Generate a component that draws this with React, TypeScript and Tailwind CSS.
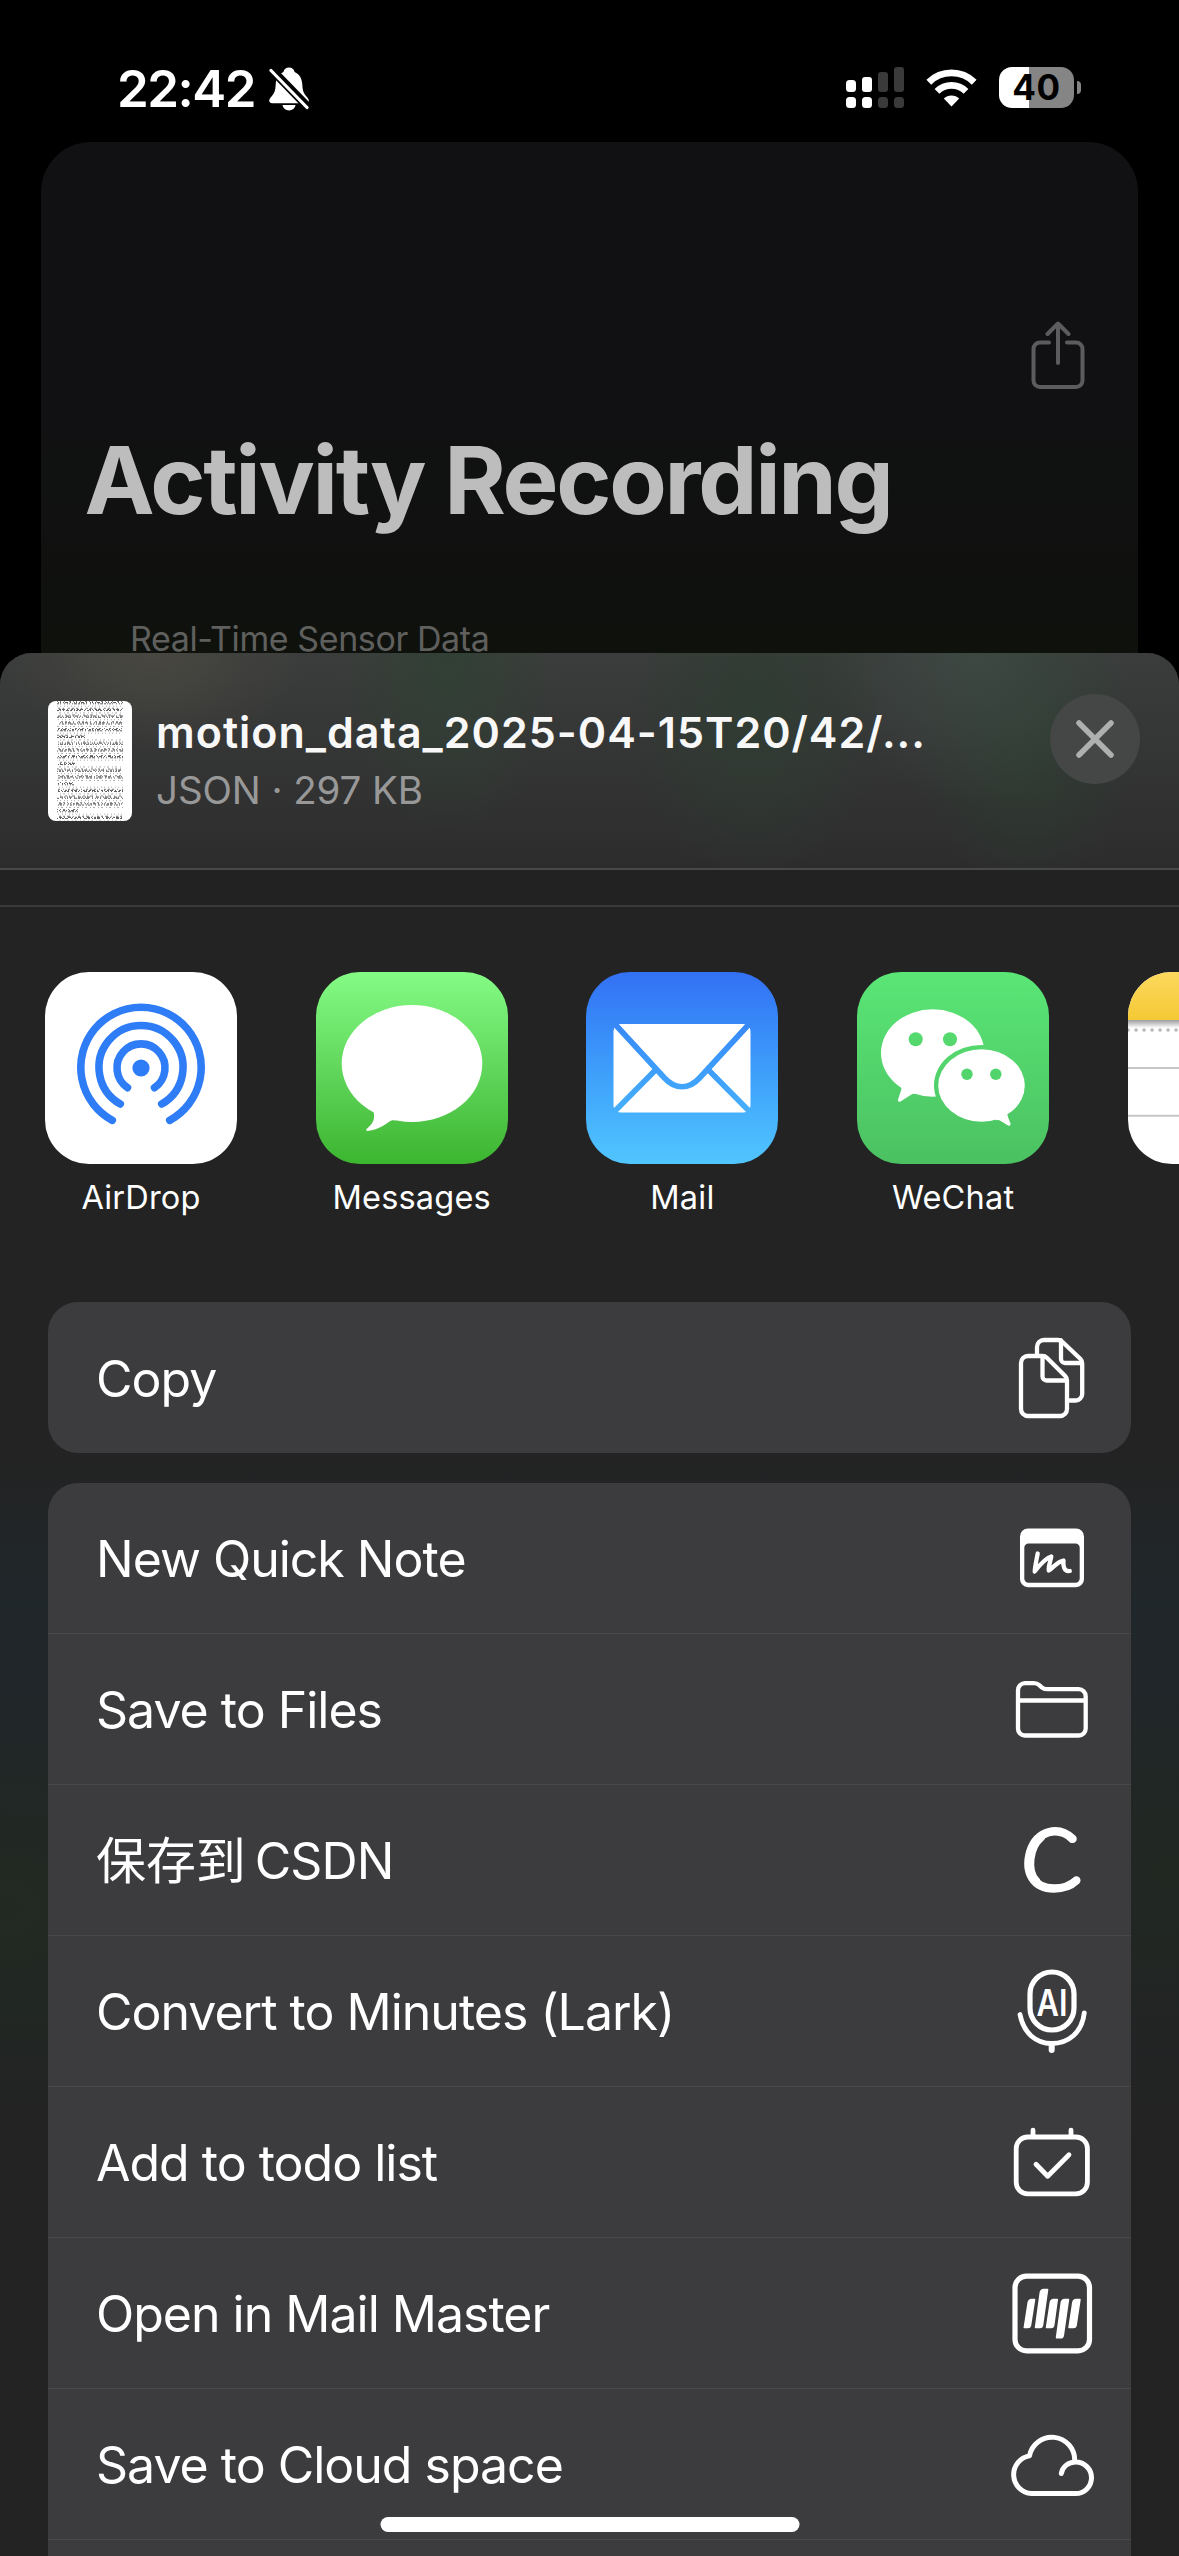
import React from "react";

const FONT = "font-['Inter','Noto_Sans_CJK_SC',sans-serif]";

function BellSlash() {
  return (
    <svg viewBox="0 0 40 44" className="h-[44px] w-[40px] shrink-0">
      <path
        d="M20 0.5c-3 0-5 1.800-5.600 4.400C9.500 7 7 11.500 6.700 17.500c-.3 6-1.200 8.500-4.200 12C.8 31.500.2 32.500.2 33.600c0 1.600 1.200 2.600 3 2.600h33.600c1.800 0 3-1 3-2.600 0-1.100-.6-2.100-2.300-4.100-3-3.500-3.900-6-4.200-12C33 11.500 30.500 7 25.600 4.900 25 2.300 23 .5 20 .5z"
        fill="#fff"
      />
      <path d="M13.500 38h13c-.5 3.200-3.200 5.400-6.500 5.400S14 41.200 13.500 38z" fill="#fff" />
      <path d="M3 3 L39 40" stroke="#000" strokeWidth="8.500" />
      <path d="M2 3.500 L38 40.500" stroke="#fff" strokeWidth="3.200" strokeLinecap="round" />
      <path d="M1.200 6.800 L5.500 11.500 L6 20 L0 20z" fill="#000" />
    </svg>
  );
}

function Signal() {
  return (
    <svg viewBox="0 0 58 41" className="h-[41px] w-[58px] shrink-0">
      <g fill="#fff">
        <rect x="0" y="13" width="10" height="12" rx="3.500" />
        <rect x="16" y="10" width="10" height="15" rx="3" />
        <rect x="0" y="30" width="10" height="11" rx="3.500" />
        <rect x="16" y="30" width="10" height="11" rx="3.500" />
      </g>
      <g fill="#3a3a3a">
        <rect x="32" y="5" width="10" height="20" rx="3" />
        <rect x="48" y="0" width="10" height="25" rx="3" />
        <rect x="32" y="30" width="10" height="11" rx="3.500" />
        <rect x="48" y="30" width="10" height="11" rx="3.500" />
      </g>
    </svg>
  );
}

function Wifi() {
  return (
    <svg viewBox="0 0 51 38" className="h-[38px] w-[51px] shrink-0">
      <g fill="none" stroke="#fff" strokeWidth="6.800">
        <path d="M2.800 13.200 A32.500 32.500 0 0 1 48.200 13.200" />
        <path d="M11 22.300 A20.600 20.600 0 0 1 40 22.300" />
      </g>
      <path d="M25.500 37.500 L17.800 29.600 A11 11 0 0 1 33.200 29.600z" fill="#fff" />
    </svg>
  );
}

function Battery() {
  return (
    <div className="flex items-center gap-[3px]">
      <div className="flex h-[41px] w-[75px] items-center justify-center rounded-[13px] bg-linear-to-r from-white from-40% to-[#858585] to-40% text-[35px] leading-none font-bold tracking-[0.5px] text-black">
        40
      </div>
      <div className="h-[13px] w-[4px] rounded-r-full bg-[#858585]" />
    </div>
  );
}

function ShareIcon() {
  return (
    <svg viewBox="0 0 54 68" className="h-[68px] w-[54px]" fill="none" stroke="#5c5c5e" strokeWidth="4" strokeLinecap="round" strokeLinejoin="round">
      <path d="M18 21.500H9a6.500 6.500 0 0 0-6.500 6.500v31.500A6.500 6.500 0 0 0 9 66h36a6.500 6.500 0 0 0 6.500-6.500V28a6.500 6.500 0 0 0-6.500-6.500h-9" />
      <path d="M27 42V3M16.500 13 27 2.500 37.500 13" />
    </svg>
  );
}

function Thumbnail() {
  const lines = Array.from({ length: 18 }, (_, i) => i);
  return (
    <svg viewBox="0 0 84 120" className="h-[120px] w-[84px] shrink-0 rounded-[8px] bg-white">
      {lines.map((i) => {
        const y = 2 + i * 6.75;
        const end = [5, 9, 12, 16].includes(i) ? 26 + ((i * 7) % 12) : 75;
        const a = 1 + ((i * 7) % 3);
        const b = 1 + ((i * 5) % 2);
        return (
          <g key={i} stroke="#333" strokeWidth="1">
            <path d={`M9 ${y - 1.5}H${end}`} strokeDasharray={`${b} 2 ${a} 3 1 4 2 2`} strokeDashoffset={i * 3} opacity="0.65" />
            <path d={`M10 ${y - 0.4}H${end}`} strokeDasharray={`${a} 1 1 2 ${b} 1 3 2 1 3`} strokeDashoffset={i * 5} opacity="0.9" />
            <path d={`M9 ${y + 0.8}H${end}`} strokeDasharray={`2 1 ${a} 3 1 2 ${b} 1 1`} strokeDashoffset={i * 11} opacity="0.8" />
            <path d={`M9 ${y + 3.2}H75`} strokeDasharray={`1 2 ${b} 3`} strokeDashoffset={i} opacity="0.4" />
          </g>
        );
      })}
    </svg>
  );
}

function AirDropIcon() {
  return (
    <svg viewBox="0 0 192 192" className="size-[192px] rounded-[44px] bg-white">
      <g fill="none" stroke="#2f7df6" strokeWidth="7.600" strokeLinecap="round">
        <path d="M67.300 148.300A60.200 60.200 0 1 1 124.700 148.300" />
        <path d="M75.300 132A42 42 0 1 1 116.700 132" />
        <path d="M82.500 115.700A24 24 0 1 1 109.500 115.700" />
      </g>
      <circle cx="96" cy="96" r="8.600" fill="#2f7df6" />
    </svg>
  );
}

function MessagesIcon() {
  return (
    <svg viewBox="0 0 192 192" className="size-[192px] rounded-[44px] bg-linear-to-b from-[#84fb84] to-[#3cb52f]">
      <ellipse cx="96" cy="91.500" rx="70.300" ry="58.500" fill="#fff" />
      <path d="M57 138C60 146 57 152 50.500 157C49.500 158.600 51 159.200 53 158.800C61 157.800 68 153.500 73.500 149.500C75.500 148.200 77 147.900 80 148.500L84 130z" fill="#fff" />
    </svg>
  );
}

function MailIcon() {
  return (
    <svg viewBox="0 0 192 192" className="size-[192px] rounded-[44px] bg-linear-to-b from-[#3370f4] to-[#51c6fe]">
      <mask id="envelope">
        <rect x="27.500" y="52" width="137" height="88.500" rx="7" fill="#fff" />
        <g fill="none" stroke="#000" strokeWidth="5.600">
          <path d="M27 50L78.500 106Q86.500 114.800 96 114.800T113.500 106L165 50" />
          <path d="M70.500 97L27 141M121.500 97L165 141" />
        </g>
      </mask>
      <rect width="192" height="192" fill="#fff" mask="url(#envelope)" />
    </svg>
  );
}

function WeChatIcon() {
  return (
    <svg viewBox="0 0 192 192" className="size-[192px] rounded-[44px] bg-linear-to-b from-[#5ae676] to-[#4bc161]">
      <mask id="rear-bubble">
        <rect width="192" height="192" fill="#fff" />
        <ellipse cx="124.500" cy="113.500" rx="47.500" ry="40.500" fill="#000" />
        <circle cx="58.700" cy="67.300" r="7" fill="#000" />
        <circle cx="93" cy="67.300" r="7" fill="#000" />
      </mask>
      <g fill="#fff" mask="url(#rear-bubble)">
        <ellipse cx="75.700" cy="81" rx="51.700" ry="43.700" />
        <path d="M43 112L44.500 117L41 127.500Q40.500 130.500 43.500 129.500L54.500 122.500Q57 121 60 122L66 112z" />
      </g>
      <ellipse cx="124.500" cy="113.500" rx="43.300" ry="36.200" fill="#fff" />
      <path d="M151 138Q149.500 142 151 145L153.500 151.500Q154 154.500 151 153.500L144.500 149.500Q142 147.500 139 148.200L135 140z" fill="#fff" />
      <circle cx="110" cy="102.300" r="5.700" fill="#50d46b" />
      <circle cx="138.800" cy="102.300" r="5.700" fill="#50d46b" />
    </svg>
  );
}

function NotesIcon() {
  return (
    <svg viewBox="0 0 192 192" className="size-[192px] rounded-[44px] bg-white">
      <defs>
        <linearGradient id="notes-top" x1="0" y1="0" x2="0" y2="1">
          <stop offset="0" stopColor="#fcd95d" />
          <stop offset="1" stopColor="#f5c935" />
        </linearGradient>
        <linearGradient id="notes-shade" x1="0" y1="0" x2="0" y2="1">
          <stop offset="0" stopColor="#9c9c9c" />
          <stop offset="1" stopColor="#ffffff" />
        </linearGradient>
      </defs>
      <rect width="192" height="48" fill="url(#notes-top)" />
      <rect y="48" width="192" height="8" fill="url(#notes-shade)" />
      <path d="M0 58H192" stroke="#b9b9bb" strokeWidth="3.500" strokeDasharray="0.100 7.900" strokeLinecap="round" />
      <path d="M0 96H192M0 143.700H192" stroke="#c6c6c8" strokeWidth="2" />
    </svg>
  );
}

function RowIcon({ children, stroke = 4.3 }: { children: React.ReactNode; stroke?: number }) {
  return (
    <svg viewBox="0 0 90 90" className="size-[90px] shrink-0" fill="none" stroke="#fff" strokeWidth={stroke} strokeLinecap="round" strokeLinejoin="round">
      {children}
    </svg>
  );
}

const copyIcon = (
  <RowIcon>
    <path d="M60 47.500V76a7 7 0 0 1-7 7H21a7 7 0 0 1-7-7V30a7 7 0 0 1 7-7h14.500q2.500 0 4.300 1.800L58.200 43q1.800 1.800 1.800 4.500z" />
    <path d="M35.500 23.500V43.500a4 4 0 0 0 4 4H59.500" />
    <path d="M30 20.500V14a7 7 0 0 1 7-7H51q2.500 0 4.300 1.800L73.500 26q1.700 1.700 1.700 4.500V61a6.500 6.500 0 0 1-6.500 6.500H62.500" />
    <path d="M54 7.500V26a4 4 0 0 0 4 4H74.500" />
  </RowIcon>
);

const quickNoteIcon = (
  <RowIcon>
    <path
      d="M21 15.500H69a8 8 0 0 1 8 8V66.200a8 8 0 0 1-8 8H21a8 8 0 0 1-8-8V23.500a8 8 0 0 1 8-8zM21.500 30.500a4.200 4.200 0 0 0-4.200 4.200V65.600a4.200 4.200 0 0 0 4.200 4.200H68.500a4.200 4.200 0 0 0 4.200-4.200V34.700a4.200 4.200 0 0 0-4.200-4.200z"
      fill="#fff"
      fillRule="evenodd"
      stroke="none"
    />
    <path d="M30.700 40.500C29.500 47 28 53 27.700 58.500C32 53 37 46 44.300 43.500C43.500 49 41 53 41.800 57.500C46 55 50 48.500 56.500 47.500C56 52 56.500 59 62.800 58" />
  </RowIcon>
);

const folderIcon = (
  <RowIcon>
    <path d="M11 26.200a7 7 0 0 1 7-7H27q3 0 5.300 2l2.400 2.100q2.200 1.900 5 1.900H71.700a7 7 0 0 1 7 7V64.500a7 7 0 0 1-7 7H18a7 7 0 0 1-7-7zM11 36.500H78.700" />
  </RowIcon>
);

const csdnIcon = (
  <RowIcon stroke={8.5}>
    <path d="M65.500 23.800C51 10 30 16 23.500 36C17 58 27 73.500 47 73.500C56.500 73.500 63.500 71 69.300 65.500" />
    <path d="M34 22C22 32 19 56 29 66" strokeWidth="8.500" />
  </RowIcon>
);

const minutesIcon = (
  <RowIcon stroke={4.8}>
    <rect x="23" y="6" width="44" height="58" rx="22" strokeWidth="5.200" />
    <path d="M13 48.500C16.500 67 29 77.500 44.700 77.500C61 77.500 75 67 77.300 46.800" />
    <path d="M44.700 79V84" strokeWidth="6" />
    <text x="29.500" y="49.800" fontSize="37" fontWeight="600" textLength="31" lengthAdjust="spacingAndGlyphs" fill="#fff" stroke="none">
      AI
    </text>
  </RowIcon>
);

const todoIcon = (
  <RowIcon stroke={4.8}>
    <rect x="9.200" y="20" width="71.200" height="56.800" rx="11.500" />
    <path d="M26 13.200V19M64 13.200V19" />
    <path d="M29 47.200L40.700 59.200L62 37.800" />
  </RowIcon>
);

const mailMasterIcon = (
  <RowIcon stroke={5.2}>
    <rect x="8" y="8.100" width="74.500" height="74.800" rx="11.500" />
    <g fill="#fff" stroke="#fff" strokeWidth="1.500">
      <path d="M24.500 31.500H27.600L23.500 57.500Q23 59.500 21 59.500H17.300L21.200 34.500Q22 31.500 24.500 31.500z" />
      <path d="M36.500 21.500H40.600L35.500 57.500Q35 59.500 33 59.500H28.500L33.300 24.500Q34 21.500 36.500 21.500z" />
      <path d="M46.500 31.500H50.300L46.700 57.500Q46.200 59.500 44.200 59.500H39.500L43.300 34.500Q44 31.500 46.500 31.500z" />
      <path d="M57.500 31.500H61.500L56.300 67.500Q55.800 69.800 53.500 69.800H49.500L54.300 34.500Q55 31.500 57.500 31.500z" />
      <path d="M69 31.500H73L69.100 57.500Q68.600 59.500 66.600 59.500H62L65.800 34.500Q66.500 31.500 69 31.500z" />
    </g>
  </RowIcon>
);

const cloudIcon = (
  <RowIcon stroke={5}>
    <path d="M54.300 54.500C55.500 47.500 61.500 43 68.700 43A15.800 15.800 0 0 1 68.700 74.600H24.500A19 19 0 0 1 22.500 36.900A22.800 22.800 0 0 1 67.700 42" />
  </RowIcon>
);

const apps = [
  { name: "AirDrop", icon: <AirDropIcon /> },
  { name: "Messages", icon: <MessagesIcon /> },
  { name: "Mail", icon: <MailIcon /> },
  { name: "WeChat", icon: <WeChatIcon /> },
  { name: "", icon: <NotesIcon /> },
];

const actions = [
  { id: "note", label: "New Quick Note", icon: quickNoteIcon },
  { id: "files", label: "Save to Files", icon: folderIcon },
  {
    id: "csdn",
    label: (
      <>
        <span className="tracking-[-0.1px] [word-spacing:-5px]">保存到 </span>
        <span className="tracking-[-0.9px]">CSDN</span>
      </>
    ),
    icon: csdnIcon,
  },
  { id: "minutes", label: "Convert to Minutes (Lark)", icon: minutesIcon },
  { id: "todo", label: "Add to todo list", icon: todoIcon },
  { id: "mail", label: "Open in Mail Master", icon: mailMasterIcon },
  { id: "cloud", label: "Save to Cloud space", icon: cloudIcon },
];

function ActionRow({ label, icon }: { label: React.ReactNode; icon: React.ReactNode }) {
  return (
    <div className="flex h-[151px] shrink-0 items-center justify-between pr-[34px] pl-[48px]">
      <span className="pt-[2px] text-[50px] leading-none tracking-[-1px] whitespace-nowrap text-white">{label}</span>
      {icon}
    </div>
  );
}

export default function App() {
  return (
    <div className={`relative flex h-[2556px] w-[1179px] flex-col overflow-hidden bg-black ${FONT}`}>
      <header className="flex h-[142px] shrink-0 items-start justify-between pt-[67px] pr-[98px] pl-[117px]">
        <div className="flex items-center gap-[14px]">
          <span className="-mt-[2px] text-[51px] leading-[41px] font-semibold tracking-[-1.5px] text-white">22:42</span>
          <BellSlash />
        </div>
        <div className="flex items-center">
          <Signal />
          <div className="pr-[22px] pl-[22px]">
            <Wifi />
          </div>
          <Battery />
        </div>
      </header>

      <main className="mr-[41.500px] ml-[41px] flex h-[511px] shrink-0 flex-col rounded-t-[50px] bg-linear-to-b from-[#111113] from-50% to-[#0f110d]">
        <div className="flex justify-end pt-[179px] pr-[53px]">
          <ShareIcon />
        </div>
        <h1 className="pt-[44px] pl-[43.500px] text-[94px] leading-none font-bold tracking-[-2.300px] whitespace-nowrap text-[#bdbdbd]">Activity Recording</h1>
        <p className="pt-[95px] pl-[89px] text-[34px] leading-none tracking-[-0.400px] whitespace-nowrap text-[#5f605e]">Real-Time Sensor Data</p>
      </main>

      <section className="flex grow flex-col overflow-hidden rounded-t-[32px] bg-linear-to-b from-[#232323] from-42% via-[#20272a] via-50% to-[#232323] to-78%">
        <div className="flex grow flex-col bg-[radial-gradient(ellipse_300px_200px_at_0%_66%,#212a22_0%,transparent_100%),radial-gradient(ellipse_300px_180px_at_100%_64%,#212822_0%,transparent_100%)]">
          <div className="flex h-[217px] shrink-0 items-start border-b-2 border-[#484848] bg-[radial-gradient(ellipse_110px_170px_at_38%_5%,#314035_0%,transparent_100%),radial-gradient(ellipse_130px_170px_at_64%_25%,#2f3c33_0%,transparent_100%),radial-gradient(ellipse_150px_150px_at_83%_0%,#3d4843_0%,transparent_100%),radial-gradient(ellipse_110px_150px_at_87%_40%,#2e3c32_0%,transparent_100%),radial-gradient(ellipse_150px_100px_at_13%_0%,#484741_0%,transparent_100%),linear-gradient(#3b3d3c,#2c2c2c)] pt-[48px] pr-[39px] pl-[48px]">
            <Thumbnail />
            <div className="flex grow flex-col pl-[24px]">
              <span className="pt-[10px] text-[43px] leading-none font-semibold tracking-[1px] whitespace-nowrap text-[#f8f8f8]">motion_data_2025-04-15T20/42/...</span>
              <span className="pt-[17px] text-[38.500px] leading-none tracking-[-0.100px] whitespace-nowrap text-[#989898]">JSON · 297 KB</span>
            </div>
            <button className="-mt-[7px] flex size-[90px] shrink-0 items-center justify-center rounded-full bg-[#444746]">
              <svg viewBox="0 0 38 38" className="size-[38px]" stroke="#aeb0af" strokeWidth="5.500" strokeLinecap="round">
                <path d="M3 3L35 35M35 3L3 35" />
              </svg>
            </button>
          </div>
          <div className="h-[37px] shrink-0 border-b-2 border-[#3a3a3a] bg-[#222222]" />

          <div className="flex h-[395px] shrink-0 gap-[78.700px] pt-[65px] pl-[45px]">
            {apps.map((app) => (
              <div key={app.name} className="flex w-[192px] shrink-0 flex-col items-center">
                {app.icon}
                <span className="pt-[18px] text-[32.500px] leading-none tracking-[0.200px] whitespace-nowrap text-white">{app.name}</span>
              </div>
            ))}
          </div>

          <div className="mx-[48px] flex shrink-0 flex-col rounded-[30px] bg-[#3c3c3e]">
            <ActionRow label="Copy" icon={copyIcon} />
          </div>
          <div className="mx-[48px] mt-[30px] flex grow flex-col divide-y divide-[#484849] overflow-hidden rounded-t-[30px] bg-[#3c3c3e]">
            {actions.map((a) => (
              <ActionRow key={a.id} label={a.label} icon={a.icon} />
            ))}
            <div className="grow" />
          </div>
        </div>
      </section>

      <div className="absolute bottom-[24px] left-1/2 h-[15px] w-[419px] -translate-x-1/2 rounded-full bg-white" />
    </div>
  );
}
